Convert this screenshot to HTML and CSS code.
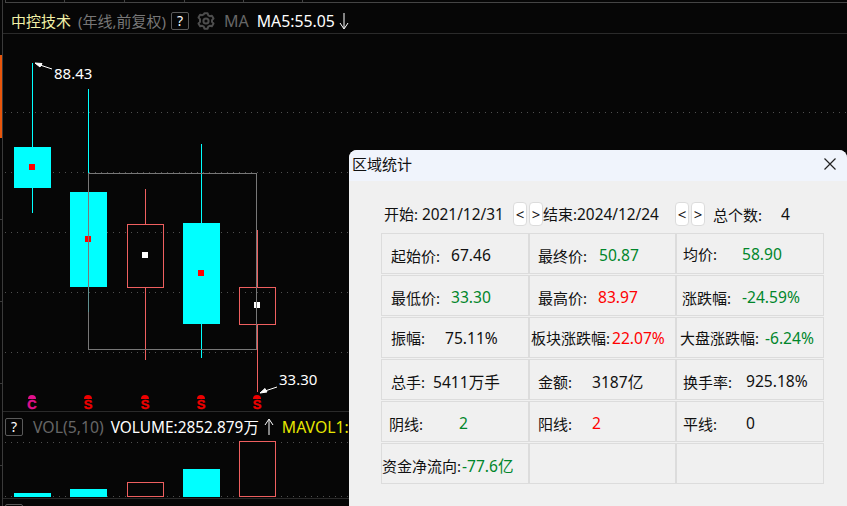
FILE: index.html
```html
<!DOCTYPE html>
<html lang="zh-CN">
  <head>
    <meta charset="utf-8">
    <title>区域统计</title>
    <link rel="stylesheet" href="styles.css">
  </head>
  <body>
    <div class="screen">

      <!-- left rail -->
      <svg class="rail" width="3" height="506" viewBox="0 0 3 506">
        <rect x="2" y="0" width="1" height="506" fill="#3a3a3a"/>
        <rect x="0" y="55" width="2" height="83" fill="#e8560c"/>
        <rect x="0" y="219" width="2" height="1" fill="#3a3a3a"/>
        <rect x="0" y="301" width="2" height="1" fill="#3a3a3a"/>
        <rect x="0" y="383" width="2" height="1" fill="#3a3a3a"/>
        <rect x="0" y="465" width="2" height="1" fill="#3a3a3a"/>
      </svg>

      <div class="main">
        <svg class="top-strip" width="844" height="3" viewBox="3 0 844 3">
          <rect x="5" y="2" width="842" height="1" fill="#444"/>
          <rect x="5" y="0" width="1" height="2" fill="#444"/>
          <rect x="64" y="0" width="1" height="2" fill="#444"/>
          <rect x="124" y="0" width="1" height="2" fill="#444"/>
          <rect x="184" y="0" width="1" height="2" fill="#444"/>
          <rect x="243" y="0" width="1" height="2" fill="#444"/>
          <rect x="302" y="0" width="1" height="2" fill="#444"/>
        </svg>

        <div class="chart-head">
          <span class="stock-name">中控技术</span>
          <span class="stock-sub">(年线,前复权)</span>
          <span class="help">?</span>
          <svg class="gear" width="18" height="18" viewBox="0 0 18 18">
            <path d="M7.4 1.2h3.2l.6 2.1 1.6.9 2.1-.5 1.6 2.8-1.5 1.6v1.8l1.5 1.6-1.6 2.8-2.1-.5-1.6.9-.6 2.1H7.4l-.6-2.1-1.6-.9-2.1.5-1.6-2.8 1.5-1.6V7.1L1.5 5.5l1.6-2.8 2.1.5 1.6-.9z" fill="none" stroke="#4d4d4d" stroke-width="2" stroke-linejoin="round"/>
            <circle cx="9" cy="9" r="2.6" fill="none" stroke="#4d4d4d" stroke-width="2"/>
          </svg>
          <span class="ma-label">MA</span>
          <span class="ma-value">MA5:55.05</span>
          <svg class="arrow" width="10" height="18" viewBox="0 0 10 18">
            <path d="M5 1V16M1 11L5 17L9 11" fill="none" stroke="#fff" stroke-width="1"/>
          </svg>
        </div>

        <!-- price chart, viewBox is in page coordinates -->
        <svg class="price" width="844" height="377" viewBox="3 34 844 377" shape-rendering="crispEdges">
          <g stroke="#4f4f4f" stroke-dasharray="1 5">
            <line x1="5" y1="112.5" x2="847" y2="112.5"/>
            <line x1="5" y1="172.5" x2="847" y2="172.5"/>
            <line x1="5" y1="232.5" x2="847" y2="232.5"/>
            <line x1="5" y1="292.5" x2="847" y2="292.5"/>
            <line x1="5" y1="352.5" x2="847" y2="352.5"/>
          </g>

          <g fill="#00ffff">
            <rect x="32" y="63" width="1" height="150"/>
            <rect x="14" y="147" width="37" height="41"/>
            <rect x="88" y="89" width="1" height="103"/>
            <rect x="70" y="192" width="37" height="95"/>
            <rect x="201" y="144" width="1" height="214"/>
            <rect x="183" y="223" width="37" height="101"/>
          </g>

          <g fill="#ee5f5f">
            <rect x="145" y="189" width="1" height="35"/>
            <rect x="145" y="288" width="1" height="72"/>
            <rect x="257" y="230" width="1" height="57"/>
            <rect x="257" y="325" width="1" height="67"/>
          </g>
          <g fill="none" stroke="#ee5f5f">
            <rect x="127.5" y="224.5" width="36" height="63"/>
            <rect x="239.5" y="287.5" width="36" height="37"/>
          </g>

          <rect x="29" y="164" width="6" height="6" fill="#ff0000"/>
          <rect x="85" y="236" width="6" height="6" fill="#ff0000"/>
          <rect x="198" y="270" width="6" height="6" fill="#ff0000"/>
          <rect x="142" y="252" width="6" height="6" fill="#ffffff"/>
          <rect x="254" y="302" width="6" height="6" fill="#ffffff"/>

          <!-- selection box -->
          <rect x="88.5" y="173.5" width="168" height="176" fill="none" stroke="#777"/>
          <rect x="88" y="287" width="1" height="25" fill="#5f9090"/>

          <g shape-rendering="auto">
            <path d="M52 69L37 64M35 63L42 63.5L40 67Z" fill="#fff" stroke="#fff" stroke-width="1"/>
            <path d="M277 387L262 392M260 393L265 388.5L267 392Z" fill="#fff" stroke="#fff" stroke-width="1"/>
            <text class="price-tag" x="54" y="79">88.43</text>
            <text class="price-tag" x="279" y="385">33.30</text>

            <path d="M28 399q0-4 4-4t4 4z" fill="#e2108c"/>
            <text class="signal signal-c" x="32" y="409">C</text>
            <path d="M84 399q0-4 4-4t4 4z" fill="#ee0000"/>
            <text class="signal" x="88" y="409">S</text>
            <path d="M141 399q0-4 4-4t4 4z" fill="#ee0000"/>
            <text class="signal" x="145" y="409">S</text>
            <path d="M197 399q0-4 4-4t4 4z" fill="#ee0000"/>
            <text class="signal" x="201" y="409">S</text>
            <path d="M253 399q0-4 4-4t4 4z" fill="#ee0000"/>
            <text class="signal" x="257" y="409">S</text>
          </g>
        </svg>

        <div class="vol-head">
          <span class="help">?</span>
          <span class="vol-label">VOL(5,10)</span>
          <span class="vol-value">VOLUME:2852.879万</span>
          <svg class="arrow" width="10" height="18" viewBox="0 0 10 18">
            <path d="M5 17V2M1 7L5 1L9 7" fill="none" stroke="#fff" stroke-width="1"/>
          </svg>
          <span class="vol-ma">MAVOL1:</span>
        </div>

        <svg class="volume" width="844" height="57" viewBox="3 441 844 57" shape-rendering="crispEdges">
          <g stroke="#4f4f4f" stroke-dasharray="1 5">
            <line x1="5" y1="442.5" x2="847" y2="442.5"/>
            <line x1="5" y1="496.5" x2="847" y2="496.5"/>
          </g>
          <g fill="#00ffff">
            <rect x="14" y="493" width="37" height="4"/>
            <rect x="70" y="489" width="37" height="8"/>
            <rect x="183" y="469" width="37" height="28"/>
          </g>
          <g fill="#060606" stroke="#ee5f5f">
            <rect x="127.5" y="482.5" width="36" height="14"/>
            <rect x="239.5" y="441.5" width="36" height="55"/>
          </g>
        </svg>

        <div class="next-pane">
          <span class="help"></span>
        </div>
      </div>

      <!-- stats window -->
      <div class="dialog">
        <div class="dialog-title">
          <span>区域统计</span>
          <svg class="close" width="12" height="12" viewBox="0 0 12 12">
            <path d="M.5 .5L11.5 11.5M11.5 .5L.5 11.5" fill="none" stroke="#222" stroke-width="1.2"/>
          </svg>
        </div>
        <div class="dialog-body">
          <div class="range">
            <span class="range-start">开始: <span class="date">2021/12/31</span></span>
            <button class="step">&lt;</button>
            <button class="step step-next">&gt;</button>
            <span class="range-end">结束:<span class="date">2024/12/24</span></span>
            <button class="step">&lt;</button>
            <button class="step step-next">&gt;</button>
            <span class="range-count">总个数:</span>
            <span class="val">4</span>
          </div>

          <div class="stats">
            <div class="cell"><span class="key w60">起始价:</span><span class="val">67.46</span></div>
            <div class="cell pad-8"><span class="key w61">最终价:</span><span class="val down">50.87</span></div>
            <div class="cell pad-7 raised"><span class="key w59">均价:</span><span class="val down">58.90</span></div>

            <div class="cell"><span class="key w60">最低价:</span><span class="val down">33.30</span></div>
            <div class="cell pad-8"><span class="key w60">最高价:</span><span class="val up">83.97</span></div>
            <div class="cell pad-6"><span class="key w60">涨跌幅:</span><span class="val down">-24.59%</span></div>

            <div class="cell flat"><span class="key w54">振幅:</span><span class="val">75.11%</span></div>
            <div class="cell flat pad-2"><span class="key w81">板块涨跌幅:</span><span class="val up">22.07%</span></div>
            <div class="cell flat pad-4"><span class="key w85">大盘涨跌幅:</span><span class="val down">-6.24%</span></div>

            <div class="cell"><span class="key w42">总手:</span><span class="val">5411万手</span></div>
            <div class="cell pad-8"><span class="key w54">金额:</span><span class="val">3187亿</span></div>
            <div class="cell pad-7"><span class="key w63">换手率:</span><span class="val">925.18%</span></div>

            <div class="cell pad-5"><span class="key w70">阴线:</span><span class="val down">2</span></div>
            <div class="cell pad-8"><span class="key w54">阳线:</span><span class="val up">2</span></div>
            <div class="cell pad-7"><span class="key w63">平线:</span><span class="val">0</span></div>

            <div class="cell pad-1"><span class="key w80">资金净流向:</span><span class="val down">-77.6亿</span></div>
            <div class="cell"></div>
            <div class="cell"></div>
          </div>
        </div>
      </div>
    </div>
  </body>
</html>
```

FILE: styles.css
```css
body {
  margin: 0;
  background-color: #060606;
  font-family: "Noto Sans", "Noto Sans CJK SC", sans-serif;
  font-size: 15px;
}

svg {
  display: block;
  flex: none;
}

.screen {
  position: relative;
  display: flex;
  width: 847px;
  height: 506px;
  overflow: hidden;
  background-color: #060606;
  color: #fff;
}

.main {
  display: flex;
  flex-direction: column;
  width: 844px;
}

/* chart header */

.chart-head {
  display: flex;
  flex: none;
  align-items: center;
  height: 25px;
  padding: 5px 0 0 8px;
  border-bottom: 1px solid #2a2a2a;
  white-space: nowrap;
}

.stock-name {
  color: #f2f2a8;
}

.stock-sub {
  margin-left: 7px;
  color: #777;
}

.help {
  display: flex;
  flex: none;
  align-items: center;
  justify-content: center;
  box-sizing: border-box;
  width: 18px;
  height: 18px;
  border: 1px solid #5a5a5a;
  border-radius: 2px;
  font-size: 14px;
  line-height: 1;
}

.stock-sub + .help {
  margin-left: 5px;
}

.gear {
  margin-left: 8px;
}

.ma-label {
  margin-left: 9px;
  color: #666;
  font-size: 16px;
}

.ma-value {
  margin-left: 8px;
  font-size: 15.8px;
}

.chart-head .arrow {
  margin-left: 4px;
}

/* price chart */

.price-tag {
  fill: #fff;
  font-size: 15px;
}

.signal {
  fill: #ee0000;
  stroke: #ee0000;
  stroke-width: 0.4;
  font-family: "Liberation Sans", sans-serif;
  font-size: 13px;
  font-weight: bold;
  text-anchor: middle;
}

.signal-c {
  fill: #e2108c;
  stroke: #e2108c;
}

/* volume pane */

.vol-head {
  display: flex;
  flex: none;
  align-items: center;
  height: 29px;
  padding-left: 2px;
  border-top: 1px solid #2a2a2a;
  white-space: nowrap;
}

.vol-label {
  margin-left: 10px;
  color: #666;
  font-size: 15.8px;
}

.vol-value {
  margin-left: 7px;
  font-size: 15.4px;
}

.vol-head .arrow {
  margin-left: 5px;
}

.vol-ma {
  margin-left: 8px;
  color: #e6e600;
  font-size: 15.8px;
}

.next-pane {
  flex: none;
  padding: 5px 0 0 2px;
  border-top: 1px solid #2a2a2a;
}

/* stats window */

.dialog {
  position: absolute;
  top: 150px;
  left: 349px;
  width: 498px;
  height: 356px;
  border-radius: 8px 8px 0 0;
  background-color: #f0f0f0;
  color: #111;
  overflow: hidden;
}

.dialog-title {
  display: flex;
  align-items: center;
  justify-content: space-between;
  height: 28px;
  padding: 0 11px 3px 3px;
  background-color: #f0f4fc;
  line-height: 28px;
}

.dialog-body {
  padding: 21px 23px 0 32px;
}

.range {
  display: flex;
  align-items: center;
  height: 24px;
  margin-bottom: 7px;
  padding-left: 3px;
  white-space: nowrap;
}

.range-start {
  width: 129px;
}

.date {
  font-size: 15.4px;
}

.step {
  box-sizing: border-box;
  width: 14px;
  height: 24px;
  padding: 0;
  border: 1px solid #dcdcdc;
  border-radius: 4px;
  background-color: #fff;
  color: #111;
  font-family: inherit;
  font-size: 15px;
}

.step-next {
  margin-left: 2px;
}

.range-end {
  width: 132px;
}

.range-count {
  width: 68px;
  margin-left: 8px;
}

.val {
  font-size: 15.6px;
}

.stats {
  display: grid;
  grid-template-columns: 148px 147px 148px;
  grid-auto-rows: 41px;
  row-gap: 1px;
}

.cell {
  display: flex;
  align-items: center;
  box-sizing: border-box;
  padding: 3px 0 0 9px;
  border: 1px solid #dcdcdc;
  white-space: nowrap;
}

.flat {
  padding-top: 0;
}

.raised {
  padding-top: 0;
}

.pad-1 { padding-left: 0; }
.pad-2 { padding-left: 1px; }
.pad-4 { padding-left: 3px; }
.pad-5 { padding-left: 7px; }
.pad-6 { padding-left: 5px; }
.pad-7 { padding-left: 6px; }
.pad-8 { padding-left: 8px; }

.key {
  flex: none;
}

.w42 { width: 42px; }
.w54 { width: 54px; }
.w59 { width: 59px; }
.w60 { width: 60px; }
.w61 { width: 61px; }
.w63 { width: 63px; }
.w70 { width: 70px; }
.w80 { width: 80px; }
.w81 { width: 81px; }
.w85 { width: 85px; }

.up {
  color: #ff0000;
}

.down {
  color: #00862b;
}
```
